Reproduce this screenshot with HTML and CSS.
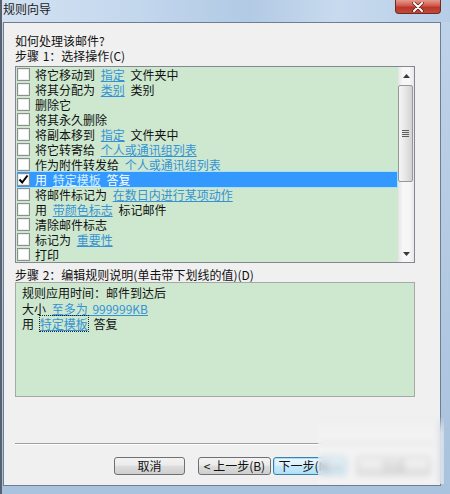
FILE: index.html
```html
<!DOCTYPE html>
<html lang="zh-CN">
<head>
<meta charset="utf-8">
<title>规则向导</title>
<link rel="stylesheet" href="styles.css">
</head>
<body>
<div class="window">
  <div class="titlebar">
    <span class="title">规则向导</span>
    <span class="close"><svg width="12" height="10" viewBox="0 0 12 10"><path d="M2 1 L10 9 M10 1 L2 9" stroke="#5a1a12" stroke-width="3.4" stroke-linecap="round"/><path d="M2 1 L10 9 M10 1 L2 9" stroke="#fff" stroke-width="2" stroke-linecap="round"/></svg></span>
  </div>
  <div class="client">
    <div class="label">如何处理该邮件?</div>
    <div class="label">步骤 1：选择操作(C)</div>
    <div class="list">
      <div class="rows">
        <div class="row"><span class="cb"></span><span class="txt">将它移动到 <span class="lnk">指定</span> 文件夹中</span></div>
        <div class="row"><span class="cb"></span><span class="txt">将其分配为 <span class="lnk">类别</span> 类别</span></div>
        <div class="row"><span class="cb"></span><span class="txt">删除它</span></div>
        <div class="row"><span class="cb"></span><span class="txt">将其永久删除</span></div>
        <div class="row"><span class="cb"></span><span class="txt">将副本移到 <span class="lnk">指定</span> 文件夹中</span></div>
        <div class="row"><span class="cb"></span><span class="txt">将它转寄给 <span class="lnk">个人或通讯组列表</span></span></div>
        <div class="row"><span class="cb"></span><span class="txt">作为附件转发给 <span class="lnk">个人或通讯组列表</span></span></div>
        <div class="row sel"><span class="cb"><svg width="11" height="11" viewBox="0 0 11 11"><path d="M1.5 5.5 L4.2 8.5 L9.5 1.5" fill="none" stroke="#000" stroke-width="2"/></svg></span><span class="txt">用 <span class="lnk">特定模板</span> 答复</span></div>
        <div class="row"><span class="cb"></span><span class="txt">将邮件标记为 <span class="lnk">在数日内进行某项动作</span></span></div>
        <div class="row"><span class="cb"></span><span class="txt">用 <span class="lnk">带颜色标志</span> 标记邮件</span></div>
        <div class="row"><span class="cb"></span><span class="txt">清除邮件标志</span></div>
        <div class="row"><span class="cb"></span><span class="txt">标记为 <span class="lnk">重要性</span></span></div>
        <div class="row"><span class="cb"></span><span class="txt">打印</span></div>
      </div>
      <div class="vscroll">
        <div class="arrow"><svg width="7" height="4" viewBox="0 0 7 4"><path d="M0 4 L3.5 0 L7 4 Z" fill="#3a3a3a"/></svg></div>
        <div class="track">
          <div class="thumb"><svg width="7" height="8" viewBox="0 0 7 8"><path d="M0 0.5 H7 M0 2.5 H7 M0 4.5 H7 M0 6.5 H7" stroke="#5d5d5d" stroke-width="1"/></svg></div>
        </div>
        <div class="arrow"><svg width="7" height="4" viewBox="0 0 7 4"><path d="M0 0 L7 0 L3.5 4 Z" fill="#3a3a3a"/></svg></div>
      </div>
    </div>
    <div class="label step2">步骤 2：编辑规则说明(单击带下划线的值)(D)</div>
    <div class="desc">
      <div class="dline">规则应用时间：邮件到达后</div>
      <div class="dline">大小 <span class="lnk">至多为 999999KB</span></div>
      <div class="dline">用 <span class="lnk focus">特定模板</span> 答复</div>
    </div>
    <div class="sep"></div>
    <div class="buttons">
      <button class="btn cancel">取消</button>
      <button class="btn prev">&lt; 上一步(B)</button>
      <button class="btn next">下一步(N) &gt;</button>
      <button class="btn finish">完成</button>
    </div>
  </div>
  <div class="haze"></div>
</div>
</body>
</html>
```

FILE: styles.css
```css
body {
  margin: 0;
  background: #ffffff;
  font-family: "Noto Sans CJK SC", "Liberation Sans", sans-serif;
  font-size: 12px;
  color: #111;
}

.window {
  width: 450px;
  height: 494px;
  box-sizing: border-box;
  border-left: 2px solid #58616d;
  background: linear-gradient(#bfd3e9, #a9c2dd);
  display: flex;
  flex-direction: column;
  position: relative;
  overflow: hidden;
}

.titlebar {
  height: 22px;
  flex: none;
  display: flex;
  justify-content: space-between;
  align-items: flex-start;
  background: linear-gradient(90deg, #d3e2f2 0%, #c3d7ed 30%, #b2cae5 55%, #c8daee 75%, #b6cde7 100%);
}

.title {
  padding: 1px 0 0 1px;
  line-height: 15px;
  font-size: 12px;
  color: #1c1c1c;
}

.close {
  width: 46px;
  height: 14px;
  box-sizing: border-box;
  margin-right: 9px;
  border: 1px solid #6d2a22;
  border-top: none;
  border-radius: 0 0 4px 4px;
  background: linear-gradient(#e59a8c 0%, #d0584a 45%, #b8362a 55%, #c2493b 100%);
  display: flex;
  justify-content: center;
  align-items: center;
}

.client {
  flex: 1;
  margin: 0 9px 8px 1px;
  background: #f0f0f0;
  border: 1px solid #6e7d90;
  padding: 10px 10px 0 11px;
  display: flex;
  flex-direction: column;
  word-spacing: 3px;
}

.label {
  line-height: 15px;
  height: 15px;
  white-space: nowrap;
  word-spacing: 1px;
}

.list {
  margin-top: 3px;
  width: 400px;
  height: 197px;
  box-sizing: border-box;
  border: 1px solid #838790;
  background: #cde8cf;
  display: flex;
  flex: none;
}

.rows {
  flex: 1;
  overflow: hidden;
}

.row {
  height: 15px;
  margin: 0 1px;
  display: flex;
  align-items: center;
  white-space: nowrap;
}

.txt {
  display: block;
  height: 15px;
  line-height: 15px;
  overflow: hidden;
}

.cb {
  width: 13px;
  height: 13px;
  box-sizing: border-box;
  flex: none;
  margin-right: 5px;
  border: 1px solid #8e8f8f;
  background: #ffffff;
  box-shadow: inset 0 0 0 1px #ececec;
  display: flex;
  align-items: center;
  justify-content: center;
}

.lnk {
  display: inline-block;
  height: 15px;
  line-height: 15px;
  vertical-align: top;
  color: #3592d4;
  text-decoration: underline;
  word-spacing: 2px;
}

.row.sel {
  background: #3399ff;
  color: #ffffff;
  outline: 1px solid #a9e2f5;
}

.row.sel .lnk {
  color: #d6efff;
}

.vscroll {
  width: 16px;
  flex: none;
  display: flex;
  flex-direction: column;
  background: linear-gradient(90deg, #e4e4e4, #f7f7f7 30%, #f7f7f7 70%, #e8e8e8);
}

.arrow {
  height: 17px;
  display: flex;
  align-items: center;
  justify-content: center;
}

.track {
  flex: 1;
  padding-top: 1px;
}

.thumb {
  height: 97px;
  margin-right: 1px;
  box-sizing: border-box;
  border: 1px solid #979797;
  border-radius: 2px;
  background: linear-gradient(90deg, #f5f5f5, #e6e6e6 50%, #d2d2d2);
  display: flex;
  align-items: center;
  justify-content: center;
}

.step2 {
  margin-top: 4px;
}

.desc {
  width: 400px;
  height: 115px;
  box-sizing: border-box;
  border: 1px solid #a8a8a8;
  background: #cde8cf;
  padding: 2px 6px;
  flex: none;
}

.dline {
  height: 15.5px;
  line-height: 15.5px;
  white-space: nowrap;
}

.focus {
  outline: 1px dotted #222;
  outline-offset: 0;
}

.sep {
  height: 1px;
  background: #a0a0a0;
  border-bottom: 1px solid #ffffff;
  margin: 46px -6px 0 0;
  flex: none;
}

.buttons {
  margin-top: 12px;
  display: flex;
  justify-content: flex-end;
  word-spacing: 0;
}

.btn {
  height: 18px;
  padding: 0;
  box-sizing: border-box;
  border: 1px solid #707070;
  border-radius: 3px;
  background: linear-gradient(#f3f3f3 0%, #ebebeb 45%, #dddddd 50%, #cfcfcf 100%);
  font-family: "Noto Sans CJK SC", "Liberation Sans", sans-serif;
  font-size: 12px;
  line-height: 16px;
  color: #111;
  text-align: center;
  white-space: nowrap;
}

.cancel {
  width: 71px;
  margin-right: 13px;
}

.prev {
  width: 73px;
  margin-right: 2px;
}

.next {
  width: 73px;
  margin-right: 11px;
  border-color: #3c7fb1;
  box-shadow: inset 0 0 0 1px #a8e0f6;
  background: linear-gradient(#eaf6fd 0%, #dcf1fc 45%, #c6e9fc 50%, #b4dff7 100%);
}

.finish {
  width: 73px;
  color: #8c8c8c;
}

.haze {
  position: absolute;
  left: 316px;
  top: 416px;
  width: 126px;
  height: 68px;
  backdrop-filter: blur(3px);
  background: rgba(246, 246, 246, 0.5);
  -webkit-mask-image: linear-gradient(transparent 0%, #000 25%, #000 100%);
  mask-image: linear-gradient(transparent 0%, #000 25%, #000 100%);
}
```
